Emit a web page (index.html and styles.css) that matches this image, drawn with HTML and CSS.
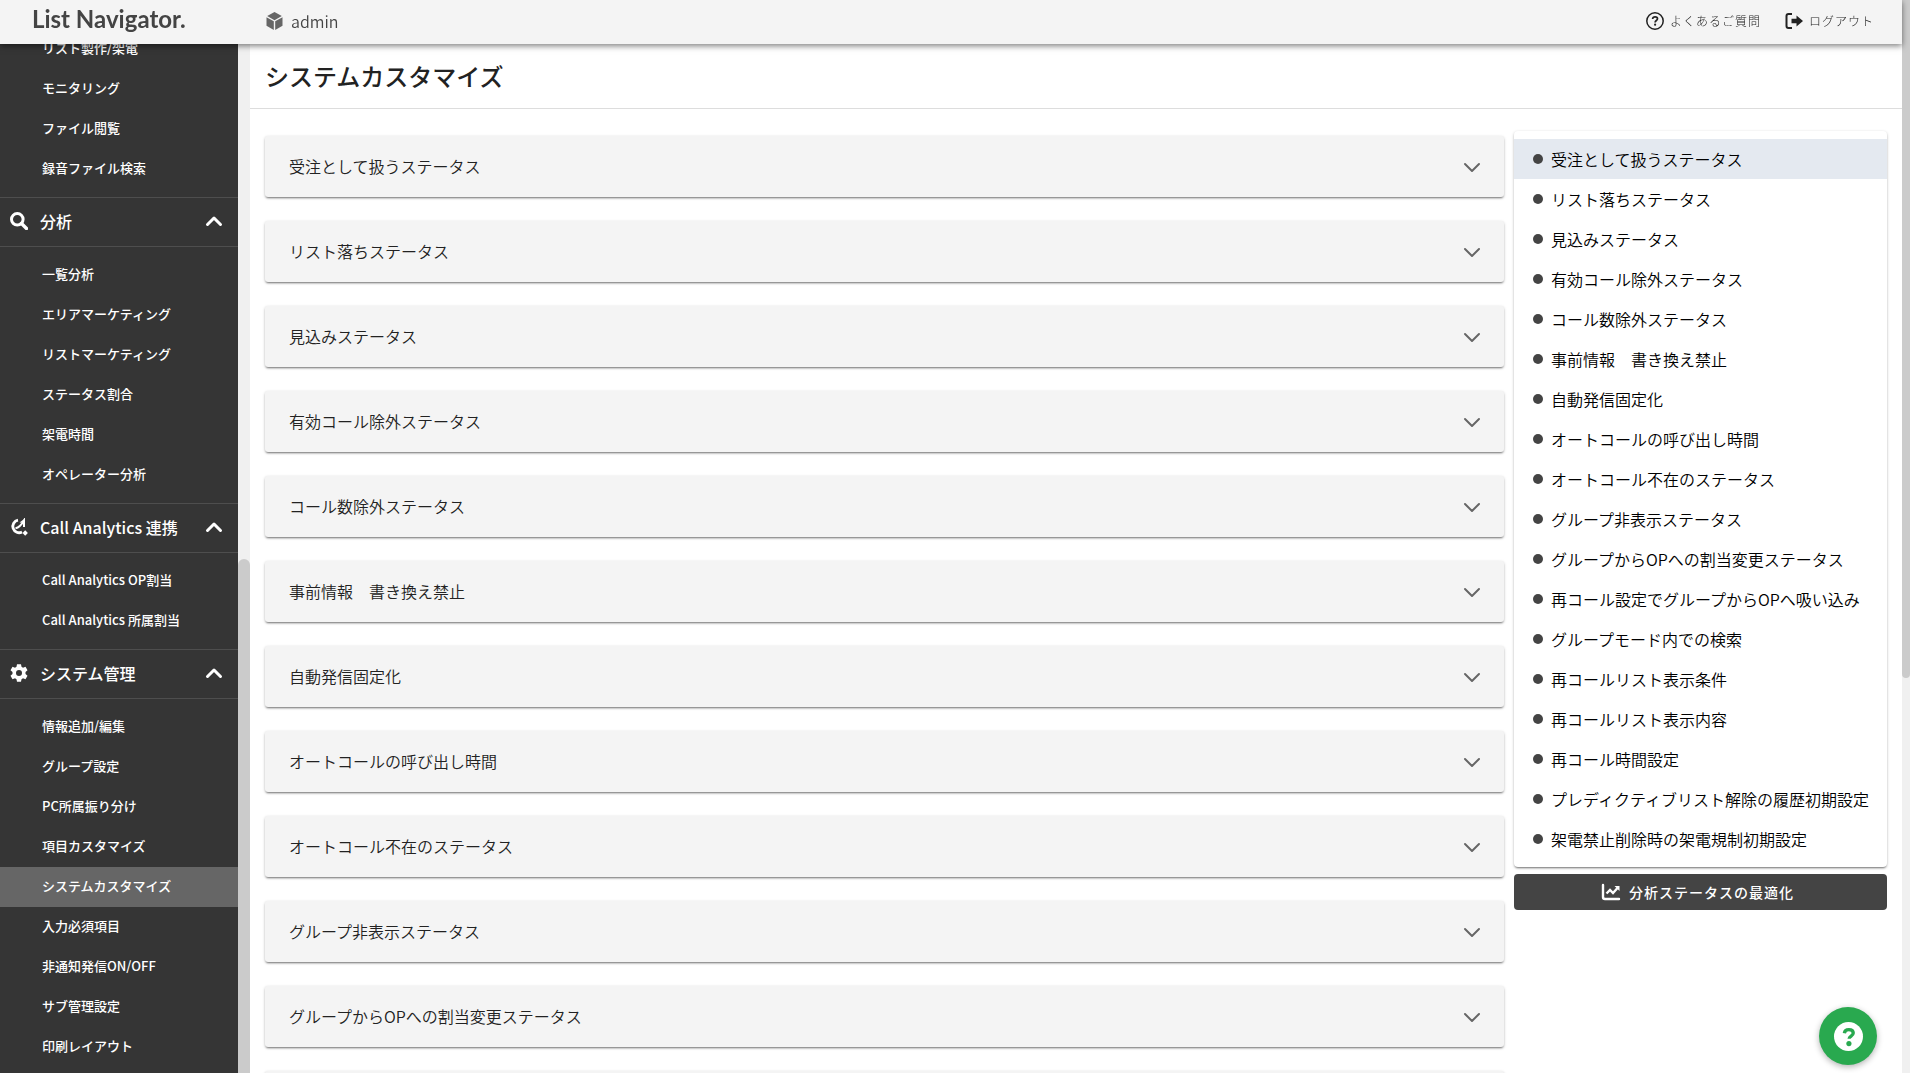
FILE: index.html
```html
<!DOCTYPE html>
<html lang="ja">
<head>
<meta charset="utf-8">
<title>システムカスタマイズ | List Navigator.</title>
<link rel="stylesheet" href="styles.css">
</head>
<body>
<svg class="sprite" aria-hidden="true">
  <symbol id="chevron" viewBox="0 0 18 12"><path d="M2.500 9.500 9 3l6.500 6.500" fill="none" stroke="currentColor" stroke-width="3" stroke-linecap="round" stroke-linejoin="round"/></symbol>
  <symbol id="chevron-down" viewBox="0 0 18 18"><path d="M2 7l7 7 7-7" fill="none" stroke="currentColor" stroke-width="2" stroke-linecap="round" stroke-linejoin="round"/></symbol>
</svg>

<header class="topbar">
  <a class="brand" href="#">List Navigator.</a>
  <div class="account">
    <svg class="account-icon" viewBox="0 0 16 18"><path d="M8 0l7.300 4L8 8.200.700 4zM0 5.200l7.300 4.100V18L0 13.700zM16 5.200v8.500L8.700 18V9.300z" fill="currentColor"/></svg>
    <span>admin</span>
  </div>
  <nav class="toplinks">
    <a class="toplink" href="#">
      <svg class="toplink-icon" viewBox="0 0 18 18"><circle cx="9" cy="9" r="8.200" fill="none" stroke="currentColor" stroke-width="1.500"/><path d="M6.600 7c.1-1.400 1.100-2.200 2.500-2.200s2.400.8 2.400 2c0 1.700-2.400 1.800-2.400 3.600" fill="none" stroke="currentColor" stroke-width="1.700"/><circle cx="9.100" cy="12.700" r="1.100" fill="currentColor"/></svg>
      <span>よくあるご質問</span>
    </a>
    <a class="toplink" href="#">
      <svg class="toplink-icon" viewBox="0 0 18 18"><path d="M7 2H3.500Q1.500 2 1.500 4v10q0 2 2 2H7" fill="none" stroke="currentColor" stroke-width="2"/><path d="M6.500 6.800h5V3.500L18 9l-6.500 5.500v-3.300h-5z" fill="currentColor"/></svg>
      <span>ログアウト</span>
    </a>
  </nav>
</header>

<div class="layout">
  <nav class="sidebar">
    <div class="menu">
      <ul class="menu-list menu-list-scrolled">
        <li><a class="menu-item" href="#">リスト製作/架電</a></li>
        <li><a class="menu-item" href="#">モニタリング</a></li>
        <li><a class="menu-item" href="#">ファイル閲覧</a></li>
        <li><a class="menu-item" href="#">録音ファイル検索</a></li>
      </ul>
      <button class="menu-head" type="button">
        <svg class="menu-icon" viewBox="0 0 18 18"><circle cx="7.300" cy="7.300" r="5.800" fill="none" stroke="currentColor" stroke-width="3"/><path d="M11.500 11.500l5 5" stroke="currentColor" stroke-width="3.400" stroke-linecap="round"/></svg>
        <span class="menu-title">分析</span>
        <svg class="menu-chevron"><use href="#chevron"/></svg>
      </button>
      <ul class="menu-list">
        <li><a class="menu-item" href="#">一覧分析</a></li>
        <li><a class="menu-item" href="#">エリアマーケティング</a></li>
        <li><a class="menu-item" href="#">リストマーケティング</a></li>
        <li><a class="menu-item" href="#">ステータス割合</a></li>
        <li><a class="menu-item" href="#">架電時間</a></li>
        <li><a class="menu-item" href="#">オペレーター分析</a></li>
      </ul>
      <button class="menu-head" type="button">
        <svg class="menu-icon" viewBox="0 0 18 18"><path d="M8 2.200A6.300 6.300 0 1 0 12 14" fill="none" stroke="currentColor" stroke-width="2.800"/><path d="M5.500 10.300Q10 9.500 14 2.500V9" fill="none" stroke="currentColor" stroke-width="2"/><path d="M9.500 4.500 15 .5V5z" fill="currentColor"/><path d="M15.200 12.300l2.700 2.700-2.700 2.700-2.700-2.700z" fill="currentColor"/></svg>
        <span class="menu-title">Call Analytics 連携</span>
        <svg class="menu-chevron"><use href="#chevron"/></svg>
      </button>
      <ul class="menu-list">
        <li><a class="menu-item" href="#">Call Analytics OP割当</a></li>
        <li><a class="menu-item" href="#">Call Analytics 所属割当</a></li>
      </ul>
      <button class="menu-head" type="button">
        <svg class="menu-icon" viewBox="0 0 18 18"><path fill-rule="evenodd" fill="currentColor" d="M7 .2h4l.5 2.600 1.500.9 2.500-.9 2 3.500-2 1.700v2l2 1.700-2 3.500-2.500-.9-1.500.9-.5 2.600H7l-.5-2.600-1.500-.9-2.500.9-2-3.500L2.500 10V8L.5 6.300l2-3.500 2.500.9 1.500-.9zM9 6a3 3 0 1 0 0 6 3 3 0 0 0 0-6z"/></svg>
        <span class="menu-title">システム管理</span>
        <svg class="menu-chevron"><use href="#chevron"/></svg>
      </button>
      <ul class="menu-list">
        <li><a class="menu-item" href="#">情報追加/編集</a></li>
        <li><a class="menu-item" href="#">グループ設定</a></li>
        <li><a class="menu-item" href="#">PC所属振り分け</a></li>
        <li><a class="menu-item" href="#">項目カスタマイズ</a></li>
        <li><a class="menu-item menu-item-active" href="#" aria-current="page">システムカスタマイズ</a></li>
        <li><a class="menu-item" href="#">入力必須項目</a></li>
        <li><a class="menu-item" href="#">非通知発信ON/OFF</a></li>
        <li><a class="menu-item" href="#">サブ管理設定</a></li>
        <li><a class="menu-item" href="#">印刷レイアウト</a></li>
      </ul>
    </div>
    <div class="side-track"><div class="side-thumb"></div></div>
  </nav>

  <main class="content">
    <h1 class="page-title">システムカスタマイズ</h1>
    <div class="columns">
      <div class="accordions">
        <button class="accordion" type="button"><span>受注として扱うステータス</span><svg class="accordion-icon"><use href="#chevron-down"/></svg></button>
        <button class="accordion" type="button"><span>リスト落ちステータス</span><svg class="accordion-icon"><use href="#chevron-down"/></svg></button>
        <button class="accordion" type="button"><span>見込みステータス</span><svg class="accordion-icon"><use href="#chevron-down"/></svg></button>
        <button class="accordion" type="button"><span>有効コール除外ステータス</span><svg class="accordion-icon"><use href="#chevron-down"/></svg></button>
        <button class="accordion" type="button"><span>コール数除外ステータス</span><svg class="accordion-icon"><use href="#chevron-down"/></svg></button>
        <button class="accordion" type="button"><span>事前情報　書き換え禁止</span><svg class="accordion-icon"><use href="#chevron-down"/></svg></button>
        <button class="accordion" type="button"><span>自動発信固定化</span><svg class="accordion-icon"><use href="#chevron-down"/></svg></button>
        <button class="accordion" type="button"><span>オートコールの呼び出し時間</span><svg class="accordion-icon"><use href="#chevron-down"/></svg></button>
        <button class="accordion" type="button"><span>オートコール不在のステータス</span><svg class="accordion-icon"><use href="#chevron-down"/></svg></button>
        <button class="accordion" type="button"><span>グループ非表示ステータス</span><svg class="accordion-icon"><use href="#chevron-down"/></svg></button>
        <button class="accordion" type="button"><span>グループからOPへの割当変更ステータス</span><svg class="accordion-icon"><use href="#chevron-down"/></svg></button>
        <button class="accordion" type="button"><span>再コール設定でグループからOPへ吸い込み</span><svg class="accordion-icon"><use href="#chevron-down"/></svg></button>
      </div>
      <aside class="toc">
        <ul class="toc-list">
          <li><a class="toc-item toc-item-active" href="#">受注として扱うステータス</a></li>
          <li><a class="toc-item" href="#">リスト落ちステータス</a></li>
          <li><a class="toc-item" href="#">見込みステータス</a></li>
          <li><a class="toc-item" href="#">有効コール除外ステータス</a></li>
          <li><a class="toc-item" href="#">コール数除外ステータス</a></li>
          <li><a class="toc-item" href="#">事前情報　書き換え禁止</a></li>
          <li><a class="toc-item" href="#">自動発信固定化</a></li>
          <li><a class="toc-item" href="#">オートコールの呼び出し時間</a></li>
          <li><a class="toc-item" href="#">オートコール不在のステータス</a></li>
          <li><a class="toc-item" href="#">グループ非表示ステータス</a></li>
          <li><a class="toc-item" href="#">グループからOPへの割当変更ステータス</a></li>
          <li><a class="toc-item" href="#">再コール設定でグループからOPへ吸い込み</a></li>
          <li><a class="toc-item" href="#">グループモード内での検索</a></li>
          <li><a class="toc-item" href="#">再コールリスト表示条件</a></li>
          <li><a class="toc-item" href="#">再コールリスト表示内容</a></li>
          <li><a class="toc-item" href="#">再コール時間設定</a></li>
          <li><a class="toc-item" href="#">プレディクティブリスト解除の履歴初期設定</a></li>
          <li><a class="toc-item" href="#">架電禁止削除時の架電規制初期設定</a></li>
        </ul>
        <button class="optimize" type="button">
          <svg class="optimize-icon" viewBox="0 0 20 18"><path d="M2 2v12q0 2 2 2h14" fill="none" stroke="currentColor" stroke-width="2.400" stroke-linecap="round"/><path d="M5.500 10.500 9 7l3 3 4.500-5" fill="none" stroke="currentColor" stroke-width="2.400"/><path d="M13.500 3h5v5z" fill="currentColor"/></svg>
          <span>分析ステータスの最適化</span>
        </button>
      </aside>
    </div>
  </main>
</div>

<div class="page-track"><div class="page-thumb"></div></div>

<button class="help" type="button" aria-label="ヘルプ">
  <svg class="help-icon" viewBox="0 0 28 28"><circle cx="14" cy="14" r="14" fill="#fff"/><path d="M10 10.800c.3-2.400 2-3.500 4.300-3.500 2.500 0 4.300 1.300 4.300 3.400 0 2.900-4 2.900-4 5.500" fill="none" stroke="#29a94f" stroke-width="3.200"/><circle cx="14.400" cy="20.800" r="2.500" fill="#29a94f"/></svg>
</button>
</body>
</html>
```
FILE: styles.css
```css
* {
  box-sizing: border-box;
}

body {
  margin: 0;
  height: 100vh;
  overflow: hidden;
  display: flex;
  flex-direction: column;
  background: #fff;
  color: #222;
  font-family: "Noto Sans CJK JP", "Noto Sans", sans-serif;
  font-size: 16px;
  font-weight: 350;
  line-height: 24px;
}

a {
  color: inherit;
  text-decoration: none;
}

button {
  border: 0;
  font: inherit;
  color: inherit;
  cursor: pointer;
}

ul {
  margin: 0;
  padding: 0;
  list-style: none;
}

.sprite {
  display: none;
}

/* Top bar */
.topbar {
  position: relative;
  z-index: 2;
  flex: none;
  display: flex;
  align-items: center;
  height: 44px;
  margin-right: 8px;
  padding: 0 28px 2px 32px;
  background: #f4f4f4;
  box-shadow: 0 2px 6px rgba(0, 0, 0, 0.5);
}

.brand {
  width: 234px;
  padding-bottom: 4px;
  color: #444;
  font-family: "Lato", sans-serif;
  font-size: 24px;
  font-weight: 700;
}

.account {
  display: flex;
  align-items: center;
  gap: 8px;
  color: #444;
  font-size: 16px;
}

.account-icon {
  width: 17px;
  height: 18px;
  color: #666;
}

.toplinks {
  display: flex;
  gap: 24px;
  margin-left: auto;
}

.toplink {
  display: flex;
  align-items: center;
  gap: 6px;
  font-size: 12px;
  font-weight: 300;
  letter-spacing: 1px;
}

.toplink-icon {
  width: 18px;
  height: 18px;
}

/* Page frame */
.layout {
  flex: 1;
  min-height: 0;
  display: flex;
}

/* Sidebar */
.sidebar {
  flex: none;
  display: flex;
  width: 250px;
  overflow: hidden;
}

.menu {
  flex: 1;
  background: #353535;
  color: #fff;
  font-weight: 500;
}

.menu-list {
  padding: 8px 0;
}

.menu-list-scrolled {
  margin-top: -15px;
  padding-top: 0;
}

.menu-item {
  display: block;
  padding: 0 0 2px 42px;
  font-size: 13px;
  line-height: 38px;
}

.menu-item-active {
  background: #666;
}

.menu-head {
  display: flex;
  align-items: center;
  width: 100%;
  height: 50px;
  padding: 0 15px 2px 10px;
  border-top: 1px solid #4e4e4e;
  border-bottom: 1px solid #4e4e4e;
  background: none;
  text-align: left;
}

.menu-icon {
  width: 18px;
  height: 18px;
  margin-right: 12px;
}

.menu-title {
  flex: 1;
}

.menu-chevron {
  width: 18px;
  height: 12px;
}

.side-track {
  flex: none;
  display: flex;
  flex-direction: column;
  justify-content: flex-end;
  width: 12px;
  background: #f0f0f0;
}

.side-thumb {
  height: 50%;
  border-radius: 6px 6px 0 0;
  background: #cbcbcb;
}

/* Main area */
.content {
  flex: 1;
  min-width: 0;
  margin-right: 8px;
}

.page-title {
  margin: 0;
  padding: 16px 15px;
  border-bottom: 1px solid #ddd;
  font-size: 24px;
  font-weight: 500;
  line-height: 32px;
}

.columns {
  display: flex;
  align-items: flex-start;
  gap: 10px;
  padding: 22px 15px 0;
}

.accordions {
  flex: 1;
  display: flex;
  flex-direction: column;
  gap: 24px;
  padding-top: 5px;
}

.accordion {
  display: flex;
  align-items: center;
  justify-content: space-between;
  height: 61px;
  padding: 0 23px 2px 24px;
  border-radius: 3px;
  background: #f4f4f4;
  box-shadow: 0 2px 2px -1px rgba(0, 0, 0, 0.4), 0 1px 3px rgba(0, 0, 0, 0.25);
}

.accordion-icon {
  width: 18px;
  height: 18px;
  color: #666;
}

/* Section index */
.toc {
  flex: none;
  width: 373px;
}

.toc-list {
  padding: 8px 0;
  border-radius: 4px;
  box-shadow: 0 2px 2px -1px rgba(0, 0, 0, 0.4), 0 1px 3px rgba(0, 0, 0, 0.25);
}

.toc-item {
  display: flex;
  align-items: center;
  gap: 8px;
  height: 40px;
  padding-left: 19px;
  color: #000;
}

.toc-item::before {
  content: "";
  width: 10px;
  height: 10px;
  border-radius: 50%;
  background: #444;
}

.toc-item-active {
  background: #e4e9f0;
}

.optimize {
  display: flex;
  align-items: center;
  justify-content: center;
  gap: 8px;
  width: 100%;
  height: 36px;
  margin-top: 7px;
  padding: 0 12px 0 6px;
  border-radius: 4px;
  background: #444;
  color: #fff;
  font-size: 14px;
  font-weight: 500;
  letter-spacing: 1px;
}

.optimize-icon {
  width: 20px;
  height: 18px;
}

/* Page scrollbar */
.page-track {
  position: fixed;
  top: 0;
  right: 0;
  bottom: 0;
  width: 8px;
  background: #f0f0f0;
}

.page-thumb {
  height: 63.2%;
  border-radius: 0 0 4px 4px;
  background: #cbcbcb;
}

/* Floating help */
.help {
  position: fixed;
  right: 33px;
  bottom: 8px;
  display: flex;
  align-items: center;
  justify-content: center;
  width: 58px;
  height: 58px;
  padding: 0;
  border-radius: 50%;
  background: #29a94f;
  box-shadow: 0 2px 6px rgba(0, 0, 0, 0.3);
}

.help-icon {
  width: 29px;
  height: 29px;
}
```
